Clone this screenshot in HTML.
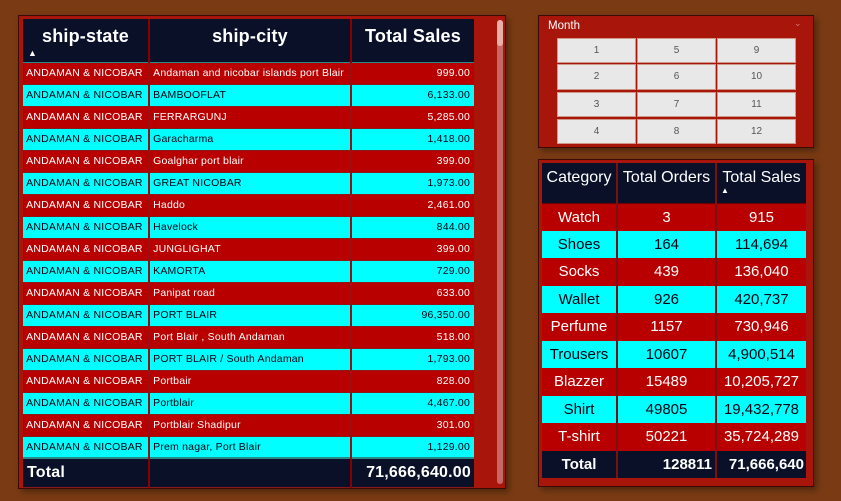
<!DOCTYPE html>
<html><head><meta charset="utf-8"><style>
*{margin:0;padding:0;box-sizing:border-box}
body{width:841px;height:501px;background:#7a3b14;font-family:"Liberation Sans",sans-serif;position:relative;overflow:hidden}
.p{position:absolute;background:#a8150b;border:1px solid #3a0a05;box-shadow:3px 3px 6px rgba(0,0,0,.35)}
.c{position:absolute;overflow:hidden;white-space:nowrap}
table{border-collapse:collapse;position:absolute}
td{padding:0;white-space:nowrap;vertical-align:middle}
.L td{height:22px;font-size:10.5px;letter-spacing:0.2px;border-right:2px solid #9a1010;border-bottom:1px solid #8a1a1a}
.r{background:#b80000;color:#fff}
.y{background:#00ffff;color:#001;}
.R td{font-size:15px;text-align:center;border-right:2px solid #7a1010}
.btn{position:absolute;width:79px;background:#e8e8e8;border:1px solid #c98;font-size:10px;color:#555;text-align:center}
</style></head><body>
<div class="p" style="left:18px;top:15px;width:488px;height:474px"></div>
<div style="position:absolute;left:497px;top:20px;width:6px;height:464px;background:#c46a64;border-radius:3px"></div>
<div style="position:absolute;left:497px;top:20px;width:6px;height:26px;background:#e8b0a8;border-radius:3px"></div>
<table class="L" style="left:23px;top:19px;width:451px">
<tr style="background:#091028;color:#fff;font-weight:bold;font-size:18px"><td style="width:126px;height:43px;text-align:center;position:relative;font-size:18px;border-right:2px solid #8a0000;border-bottom:1px solid #2a8a8a"><span style="position:relative;top:-4px">ship-state</span><span style="position:absolute;left:5px;top:29px;font-size:9px">&#9650;</span></td><td style="width:202px;text-align:center;font-size:18px;border-right:2px solid #8a0000;border-bottom:1px solid #2a8a8a"><span style="position:relative;top:-4px">ship-city</span></td><td style="text-align:center;font-size:18px;border-right:0;border-bottom:1px solid #2a8a8a"><span style="position:relative;top:-4px">Total Sales</span></td></tr>
<tr class="r"><td>&nbsp;ANDAMAN &amp; NICOBAR</td><td>&nbsp;Andaman and nicobar islands port Blair</td><td style="text-align:right;padding-right:4px;border-right:0">999.00</td></tr>
<tr class="y"><td>&nbsp;ANDAMAN &amp; NICOBAR</td><td>&nbsp;BAMBOOFLAT</td><td style="text-align:right;padding-right:4px;border-right:0">6,133.00</td></tr>
<tr class="r"><td>&nbsp;ANDAMAN &amp; NICOBAR</td><td>&nbsp;FERRARGUNJ</td><td style="text-align:right;padding-right:4px;border-right:0">5,285.00</td></tr>
<tr class="y"><td>&nbsp;ANDAMAN &amp; NICOBAR</td><td>&nbsp;Garacharma</td><td style="text-align:right;padding-right:4px;border-right:0">1,418.00</td></tr>
<tr class="r"><td>&nbsp;ANDAMAN &amp; NICOBAR</td><td>&nbsp;Goalghar port blair</td><td style="text-align:right;padding-right:4px;border-right:0">399.00</td></tr>
<tr class="y"><td>&nbsp;ANDAMAN &amp; NICOBAR</td><td>&nbsp;GREAT NICOBAR</td><td style="text-align:right;padding-right:4px;border-right:0">1,973.00</td></tr>
<tr class="r"><td>&nbsp;ANDAMAN &amp; NICOBAR</td><td>&nbsp;Haddo</td><td style="text-align:right;padding-right:4px;border-right:0">2,461.00</td></tr>
<tr class="y"><td>&nbsp;ANDAMAN &amp; NICOBAR</td><td>&nbsp;Havelock</td><td style="text-align:right;padding-right:4px;border-right:0">844.00</td></tr>
<tr class="r"><td>&nbsp;ANDAMAN &amp; NICOBAR</td><td>&nbsp;JUNGLIGHAT</td><td style="text-align:right;padding-right:4px;border-right:0">399.00</td></tr>
<tr class="y"><td>&nbsp;ANDAMAN &amp; NICOBAR</td><td>&nbsp;KAMORTA</td><td style="text-align:right;padding-right:4px;border-right:0">729.00</td></tr>
<tr class="r"><td>&nbsp;ANDAMAN &amp; NICOBAR</td><td>&nbsp;Panipat road</td><td style="text-align:right;padding-right:4px;border-right:0">633.00</td></tr>
<tr class="y"><td>&nbsp;ANDAMAN &amp; NICOBAR</td><td>&nbsp;PORT BLAIR</td><td style="text-align:right;padding-right:4px;border-right:0">96,350.00</td></tr>
<tr class="r"><td>&nbsp;ANDAMAN &amp; NICOBAR</td><td>&nbsp;Port Blair , South Andaman</td><td style="text-align:right;padding-right:4px;border-right:0">518.00</td></tr>
<tr class="y"><td>&nbsp;ANDAMAN &amp; NICOBAR</td><td>&nbsp;PORT BLAIR / South Andaman</td><td style="text-align:right;padding-right:4px;border-right:0">1,793.00</td></tr>
<tr class="r"><td>&nbsp;ANDAMAN &amp; NICOBAR</td><td>&nbsp;Portbair</td><td style="text-align:right;padding-right:4px;border-right:0">828.00</td></tr>
<tr class="y"><td>&nbsp;ANDAMAN &amp; NICOBAR</td><td>&nbsp;Portblair</td><td style="text-align:right;padding-right:4px;border-right:0">4,467.00</td></tr>
<tr class="r"><td>&nbsp;ANDAMAN &amp; NICOBAR</td><td>&nbsp;Portblair Shadipur</td><td style="text-align:right;padding-right:4px;border-right:0">301.00</td></tr>
<tr class="y"><td>&nbsp;ANDAMAN &amp; NICOBAR</td><td>&nbsp;Prem nagar, Port Blair</td><td style="text-align:right;padding-right:4px;border-right:0">1,129.00</td></tr>
<tr style="background:#091028;color:#fff;font-weight:bold"><td style="height:29px;font-size:16px;padding-left:4px;border-top:2px solid #2a8a8a;border-right:2px solid #8a0000">Total</td><td style="border-top:2px solid #2a8a8a;border-right:2px solid #8a0000"></td><td style="text-align:right;padding-right:3px;font-size:16px;border-top:2px solid #2a8a8a;border-right:0">71,666,640.00</td></tr>
</table>

<div class="p" style="left:538px;top:15px;width:276px;height:133px"></div>
<div class="c" style="left:548px;top:20px;font-size:11.5px;color:#fff">Month</div>
<div class="c" style="left:794px;top:18px;font-size:9px;color:#d77">&#8964;</div>
<div class="btn" style="left:557px;top:38px;height:25px;line-height:23px">1</div>
<div class="btn" style="left:637px;top:38px;height:25px;line-height:23px">5</div>
<div class="btn" style="left:717px;top:38px;height:25px;line-height:23px">9</div>
<div class="btn" style="left:557px;top:64px;height:26px;line-height:24px">2</div>
<div class="btn" style="left:637px;top:64px;height:26px;line-height:24px">6</div>
<div class="btn" style="left:717px;top:64px;height:26px;line-height:24px">10</div>
<div class="btn" style="left:557px;top:92px;height:25px;line-height:23px">3</div>
<div class="btn" style="left:637px;top:92px;height:25px;line-height:23px">7</div>
<div class="btn" style="left:717px;top:92px;height:25px;line-height:23px">11</div>
<div class="btn" style="left:557px;top:119px;height:25px;line-height:23px">4</div>
<div class="btn" style="left:637px;top:119px;height:25px;line-height:23px">8</div>
<div class="btn" style="left:717px;top:119px;height:25px;line-height:23px">12</div>

<div class="p" style="left:538px;top:159px;width:276px;height:328px"></div>
<table class="R" style="left:542px;top:163px;width:264px">
<tr style="background:#091028;color:#fff"><td style="width:75px;height:40px;font-size:16px;vertical-align:top;padding-top:6px;border-bottom:1px solid #6a0000">Category</td><td style="width:99px;font-size:16px;vertical-align:top;padding-top:6px;border-bottom:1px solid #6a0000">Total Orders</td><td style="font-size:16px;vertical-align:top;padding-top:6px;border-right:0;position:relative;border-bottom:1px solid #6a0000">Total Sales<span style="position:absolute;left:4px;top:23px;font-size:8px">&#9650;</span></td></tr>
<tr class="r"><td style="height:27.5px">Watch</td><td>3</td><td style="border-right:0">915</td></tr>
<tr class="y"><td style="height:27.5px">Shoes</td><td>164</td><td style="border-right:0">114,694</td></tr>
<tr class="r"><td style="height:27.5px">Socks</td><td>439</td><td style="border-right:0">136,040</td></tr>
<tr class="y"><td style="height:27.5px">Wallet</td><td>926</td><td style="border-right:0">420,737</td></tr>
<tr class="r"><td style="height:27.5px">Perfume</td><td>1157</td><td style="border-right:0">730,946</td></tr>
<tr class="y"><td style="height:27.5px">Trousers</td><td>10607</td><td style="border-right:0">4,900,514</td></tr>
<tr class="r"><td style="height:27.5px">Blazzer</td><td>15489</td><td style="border-right:0">10,205,727</td></tr>
<tr class="y"><td style="height:27.5px">Shirt</td><td>49805</td><td style="border-right:0">19,432,778</td></tr>
<tr class="r"><td style="height:27.5px">T-shirt</td><td>50221</td><td style="border-right:0">35,724,289</td></tr>
<tr style="background:#091028;color:#fff;font-weight:bold"><td style="height:27px">Total</td><td style="text-align:right;padding-right:3px">128811</td><td style="border-right:0;text-align:right;padding-right:2px">71,666,640</td></tr>
</table>
</body></html>
